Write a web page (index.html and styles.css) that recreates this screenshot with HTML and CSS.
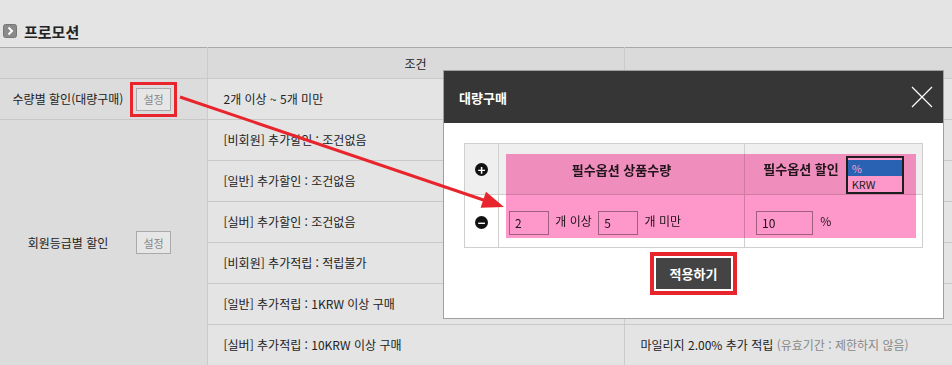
FILE: index.html
```html
<!DOCTYPE html>
<html lang="ko">
<head>
    <meta charset="UTF-8">
    <meta name="viewport" content="width=device-width, initial-scale=1.0">
    <title>프로모션</title>
    <link rel="stylesheet" href="styles.css">
</head>
<body>
    <div class="page">
        <h2 class="sec-title">
            <span class="sec-icon">
                <svg width="14" height="14" viewBox="0 0 14 14"><rect x="0.5" y="0.5" width="13" height="13" rx="2" fill="#8a8a8a" stroke="#777"/><path d="M5.5 3.5 L9 7 L5.5 10.5" fill="none" stroke="#fff" stroke-width="2"/></svg>
            </span>
            프로모션
        </h2>

        <table class="promo">
            <colgroup>
                <col class="c-name">
                <col class="c-cond">
                <col>
            </colgroup>
            <thead>
                <tr><th></th><th>조건</th><th></th></tr>
            </thead>
            <tbody>
                <tr>
                    <td class="name">
                        <div class="name-box">
                            <span class="label">수량별 할인(대량구매)</span>
                            <button class="btn-set marked">설정</button>
                        </div>
                    </td>
                    <td>2개 이상 ~ 5개 미만</td>
                    <td></td>
                </tr>
                <tr>
                    <td class="name" rowspan="6">
                        <div class="name-box">
                            <span class="label">회원등급별 할인</span>
                            <button class="btn-set">설정</button>
                        </div>
                    </td>
                    <td>[비회원] 추가할인 : 조건없음</td>
                    <td></td>
                </tr>
                <tr><td>[일반] 추가할인 : 조건없음</td><td></td></tr>
                <tr><td>[실버] 추가할인 : 조건없음</td><td></td></tr>
                <tr><td>[비회원] 추가적립 : 적립불가</td><td></td></tr>
                <tr><td>[일반] 추가적립 : 1KRW 이상 구매</td><td></td></tr>
                <tr>
                    <td>[실버] 추가적립 : 10KRW 이상 구매</td>
                    <td>마일리지 2.00% 추가 적립 <span class="note">(유효기간 : 제한하지 않음)</span></td>
                </tr>
            </tbody>
        </table>

        <!-- bulk purchase popup -->
        <div class="modal">
            <div class="modal-head">
                <span class="modal-title">대량구매</span>
                <svg class="modal-close" width="22" height="22" viewBox="0 0 22 22"><path d="M1 1 L21 21 M21 1 L1 21" stroke="#fff" stroke-width="1.2"/></svg>
            </div>
            <div class="modal-body">
                <div class="opt-wrap">
                    <table class="opt-table">
                        <colgroup>
                            <col class="o-icon">
                            <col class="o-qty">
                            <col class="o-sale">
                        </colgroup>
                        <tr class="opt-head">
                            <td><span class="circle-btn">+</span></td>
                            <td>필수옵션 상품수량</td>
                            <td>
                                <div class="sale-head">
                                    <span>필수옵션 할인</span>
                                    <div class="unit-select">
                                        <div class="unit-opt selected">%</div>
                                        <div class="unit-opt">KRW</div>
                                    </div>
                                </div>
                            </td>
                        </tr>
                        <tr class="opt-row">
                            <td><span class="circle-btn">&minus;</span></td>
                            <td class="qty">
                                <input class="txt w40" value="2"> 개 이상
                                <input class="txt w40" value="5"> 개 미만
                            </td>
                            <td class="sale">
                                <input class="txt w57" value="10"> %
                            </td>
                        </tr>
                    </table>
                    <div class="highlight"></div>
                </div>
                <div class="modal-foot">
                    <button class="btn-apply">적용하기</button>
                </div>
            </div>
        </div>

        <svg class="arrow" width="952" height="365" viewBox="0 0 952 365">
            <line x1="180" y1="97" x2="485" y2="200.5" stroke="#e8252d" stroke-width="3"/>
            <polygon points="504,207 480.6,207.8 486,191.8" fill="#e8252d"/>
        </svg>
    </div>
</body>
</html>
```

FILE: styles.css
```css
body {
    margin: 0;
    background: #e4e4e4;
    font-family: "Noto Sans CJK KR", "Noto Sans", sans-serif;
    font-size: 12px;
    color: #222;
}
.page {
    position: relative;
    width: 952px;
    height: 365px;
    overflow: hidden;
}

/* section title */
.sec-title {
    display: flex;
    align-items: center;
    gap: 7px;
    height: 47px;
    margin: 0;
    padding: 15px 0 0 3px;
    box-sizing: border-box;
    font-size: 15px;
    font-weight: bold;
    color: #222;
}
.sec-icon {
    display: flex;
}

/* main table */
.promo {
    width: 100%;
    border-collapse: collapse;
    border-top: 1px solid #a9a9a9;
}
.c-name { width: 207px; }
.c-cond { width: 417px; }
.promo th {
    height: 30px;
    padding: 0;
    background: #dadada;
    font-weight: normal;
    border-bottom: 1px solid #c8c8c8;
    border-left: 1px solid #cbcbcb;
}
.promo th:first-child { border-left: none; }
.promo td {
    height: 40px;
    padding: 0 16px;
    border-bottom: 1px solid #c8c8c8;
    border-left: 1px solid #cbcbcb;
    line-height: 16px;
}
.promo td.name {
    padding: 0;
    border-left: none;
    background: #dcdcdc;
}
.name-box {
    display: flex;
    align-items: center;
}
.name-box .label {
    width: 136px;
    text-align: center;
}
.note {
    color: #888;
}
.btn-set {
    width: 35px;
    height: 23px;
    padding: 0;
    border: 1px solid #aaa;
    background: #e6e6e6;
    font-family: inherit;
    font-size: 11px;
    color: #888;
}
.btn-set.marked {
    outline: 3px solid #e8252d;
    outline-offset: 3px;
}

/* popup */
.modal {
    position: absolute;
    left: 443px;
    top: 70px;
    width: 501px;
    height: 249px;
    box-sizing: border-box;
    border: 1px solid #a0a0a0;
    background: #fff;
}
.modal-head {
    display: flex;
    align-items: center;
    justify-content: space-between;
    height: 52px;
    padding: 0 10px 0 15px;
    background: #363636;
}
.modal-title {
    color: #fff;
    font-size: 13px;
    font-weight: bold;
}
.modal-body {
    padding: 20px 20px 0;
}
.opt-wrap {
    position: relative;
    isolation: isolate;
}
.opt-table {
    width: 459px;
    border-collapse: collapse;
    table-layout: fixed;
}
.o-icon { width: 34px; }
.o-qty { width: 246px; }
.opt-table td {
    height: 49px;
    padding: 0;
    border: 1px solid #cfcfcf;
    text-align: center;
}
.opt-head td {
    background: #efefef;
    font-size: 13px;
    font-weight: bold;
}
.opt-row td {
    background: #fff;
    padding-top: 3px;
}
.opt-row td.qty,
.opt-row td.sale {
    text-align: left;
    padding-left: 10px;
}
.opt-row td.sale {
    padding-left: 11px;
}
.circle-btn {
    display: inline-flex;
    align-items: center;
    justify-content: center;
    width: 13px;
    height: 13px;
    border-radius: 50%;
    background: #111;
    color: #fff;
    font-size: 13px;
    font-weight: bold;
    line-height: 1;
}
.txt {
    height: 24px;
    padding: 0 0 0 5px;
    box-sizing: border-box;
    border: 1px solid #a0a0a0;
    font-family: inherit;
    font-size: 12px;
    color: #222;
    background: #fff;
    vertical-align: middle;
}
.txt.w40 { width: 40px; margin-right: 3px; }
.txt.w40 + .txt.w40 { margin-left: 3px; }
.txt.w57 { width: 57px; margin-right: 4px; }

.sale-head {
    display: flex;
    align-items: center;
    justify-content: center;
    gap: 7px;
    line-height: 16px;
}
.unit-select {
    position: relative;
    z-index: 2;
    width: 58px;
    height: 38px;
    margin-top: 12px;
    box-sizing: border-box;
    padding-top: 2px;
    border: 2px solid #1e1e1e;
    background: #ff98ca;
    text-align: left;
    font-size: 11px;
    font-weight: normal;
}
.unit-opt {
    height: 16px;
    padding-left: 4px;
    line-height: 16px;
    color: #222;
}
.unit-opt.selected {
    background: #2a62b3;
    color: #ff98ca;
}

/* pink marker over the option table */
.highlight {
    position: absolute;
    left: 42px;
    top: 11px;
    width: 410px;
    height: 84px;
    background: #ff98ca;
    mix-blend-mode: multiply;
    z-index: 1;
    pointer-events: none;
}

.modal-foot {
    display: flex;
    justify-content: center;
    padding-top: 10px;
}
.btn-apply {
    width: 75px;
    height: 31px;
    padding: 0;
    border: none;
    background: #444;
    color: #fff;
    font-family: inherit;
    font-size: 13px;
    font-weight: bold;
    outline: 4px solid #e8252d;
    outline-offset: 2px;
}

.arrow {
    position: absolute;
    left: 0;
    top: 0;
    pointer-events: none;
}
```
